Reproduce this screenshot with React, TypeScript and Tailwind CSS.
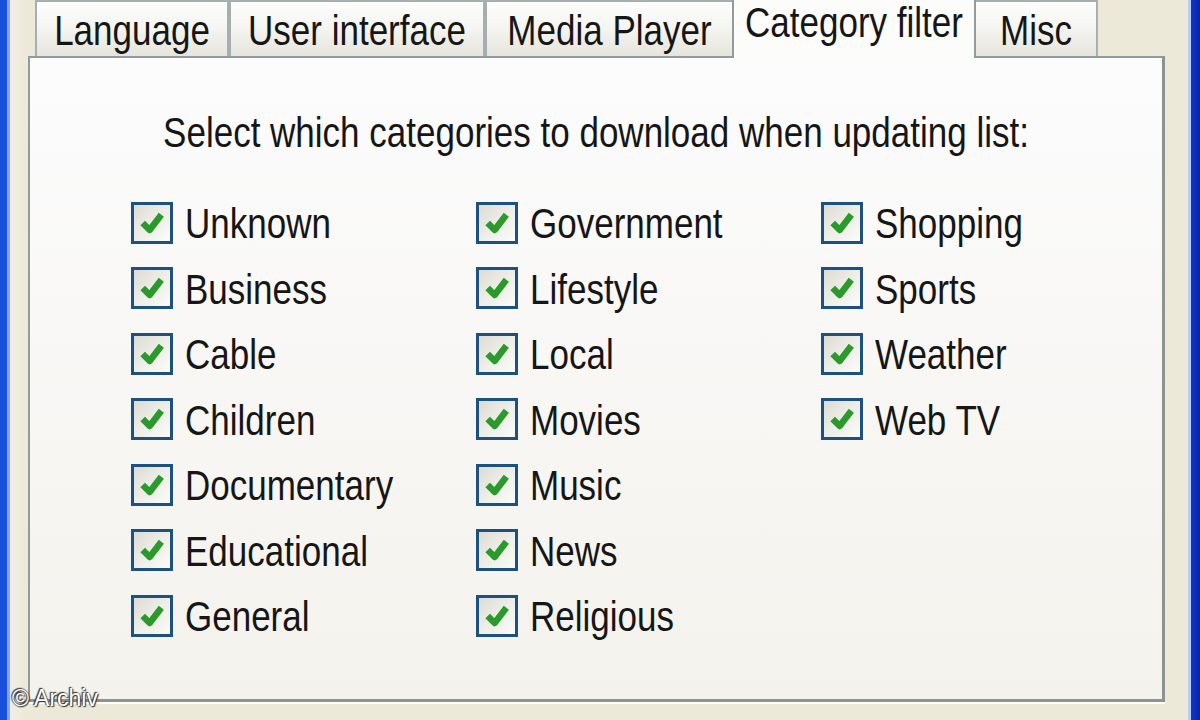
const FONT = { fontFamily: '"Liberation Sans", Arial, sans-serif' };

const COLS: string[][] = [
  ["Unknown", "Business", "Cable", "Children", "Documentary", "Educational", "General"],
  ["Government", "Lifestyle", "Local", "Movies", "Music", "News", "Religious"],
  ["Shopping", "Sports", "Weather", "Web TV"],
];

const TABS = [
  { label: "Language", w: "w-[194px]" },
  { label: "User interface", w: "w-[256px]" },
  { label: "Media Player", w: "w-[249px]" },
  { label: "Category filter", w: "w-[244px]", active: true },
  { label: "Misc", w: "w-[124px]" },
];

function CheckBox() {
  return (
    <span className="flex h-[42px] w-[42px] shrink-0 items-center justify-center border-[3px] border-[#1c5180] bg-gradient-to-br from-[#dcdcd4] via-[#eeeee8] to-[#fbfbf8]">
      <svg viewBox="0 0 12 12" className="h-[28px] w-[28px]">
        <path d="M2 6 L5 9 L10 2.5" fill="none" stroke="#2a9a2a" strokeWidth="2.8" strokeLinejoin="round" />
      </svg>
    </span>
  );
}

function Item({ label }: { label: string }) {
  return (
    <div className="flex h-[65.5px] items-center gap-[12px]">
      <CheckBox />
      <span className="inline-block scale-y-[1.22] text-[35px] leading-none text-[#161616]">{label}</span>
    </div>
  );
}

export default function App() {
  return (
    <div className="relative flex h-[720px] w-[1200px] overflow-hidden bg-[#ece9d8]" style={FONT}>
      <div className="w-[7px] bg-[#1a4fdc]" />
      <div className="w-[3px] bg-[#7fa6f0]" />
      <div className="w-[18px] bg-gradient-to-r from-[#f2ede2] to-[#ece9d8]" />

      <div className="flex w-[1137px] flex-col">
        <div className="flex h-[56px] items-end pl-[7px]">
          {TABS.map((t) =>
            t.active ? (
              <div
                key={t.label}
                className={`${t.w} relative z-10 -mb-[2px] -mx-[2px] flex h-[58px] items-start justify-center border-x-2 border-[#919b9c] bg-[#fcfcfb] pt-[5px] text-[35px] leading-[34px] text-[#161616]`}
              >
                <span className="inline-block scale-y-[1.22]">{t.label}</span>
              </div>
            ) : (
              <div
                key={t.label}
                className={`${t.w} flex h-[56px] items-center justify-center border-x-2 border-t-2 border-[#a7aeb0] bg-gradient-to-b from-[#fdfdfd] via-[#f4f4f0] to-[#e6e5dd] text-[35px] leading-none text-[#161616]`}
              >
                <span className="inline-block scale-y-[1.22]">{t.label}</span>
              </div>
            )
          )}
        </div>

        <div className="flex h-[646px] flex-col border-2 border-r-[3px] border-b-[3px] border-[#919b9c] border-r-[#8d9293] border-b-[#8d9293] bg-gradient-to-b from-[#fcfcfd] to-[#f4f2ec]">
          <div className="pt-[52px] text-center text-[35px] leading-[44px] text-[#161616]">
            <span className="inline-block scale-y-[1.22]">
              Select which categories to download when updating list:
            </span>
          </div>
          <div className="mt-[36px] grid grid-cols-[345px_345px_345px] pl-[101px]">
            {COLS.map((col, i) => (
              <div key={i} className="flex flex-col">
                {col.map((c) => (
                  <Item key={c} label={c} />
                ))}
              </div>
            ))}
          </div>
        </div>
        <div className="h-[2px] bg-white" />
      </div>

      <div className="w-[23px] bg-[#ece9d8]" />
      <div className="w-[3px] bg-[#b7cdf5]" />
      <div className="flex-1 bg-gradient-to-r from-[#1037c8] to-[#0a22a8]" />

      <div
        className="absolute bottom-[10px] left-[12px] text-[23px] leading-none text-white"
        style={{ textShadow: "0 0 2px #333, 1px 1px 1px #333, -1px -1px 1px #333" }}
      >
        © Archiv
      </div>
    </div>
  );
}
